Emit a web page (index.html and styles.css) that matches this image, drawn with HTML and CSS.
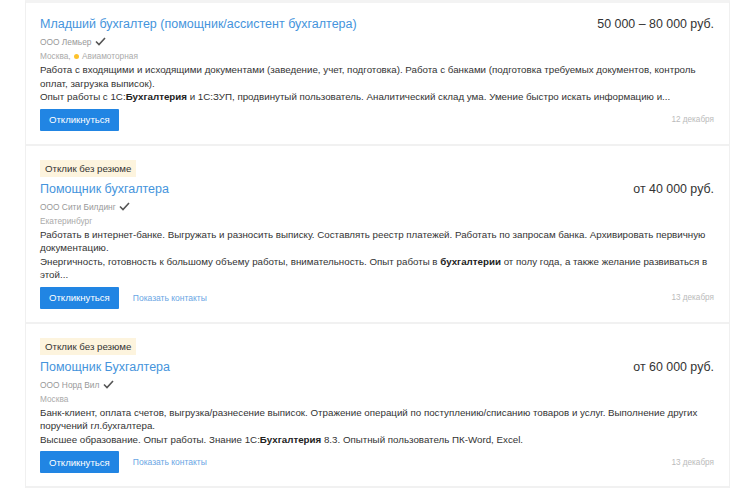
FILE: index.html
```html
<!DOCTYPE html>
<html lang="ru">
<head>
    <meta charset="UTF-8">
    <meta name="viewport" content="width=device-width, initial-scale=1.0">
    <title>Вакансии</title>
    <link rel="stylesheet" href="styles.css">
</head>
<body>
    <div class="list">
        <div class="vacancy">
            <div class="head">
                <a class="title" href="#">Младший бухгалтер (помощник/ассистент бухгалтера)</a>
                <span class="salary">50 000 – 80 000 руб.</span>
            </div>
            <div class="company">ООО Лемьер
                <svg class="check" width="11" height="9" viewBox="0 0 11 9"><polyline points="1,4.5 4,7.5 10,1" fill="none" stroke="#555" stroke-width="1.6"/></svg>
            </div>
            <div class="place">Москва, <span class="metro"></span>Авиамоторная</div>
            <div class="desc">
                <p>Работа с входящими и исходящими документами (заведение, учет, подготовка). Работа с банками (подготовка требуемых документов, контроль оплат, загрузка выписок).</p>
                <p>Опыт работы с 1С:<b>Бухгалтерия</b> и 1С:ЗУП, продвинутый пользователь. Аналитический склад ума. Умение быстро искать информацию и...</p>
            </div>
            <div class="foot">
                <button type="button" class="reply">Откликнуться</button>
                <span class="date">12 декабря</span>
            </div>
        </div>

        <div class="vacancy">
            <div class="badge">Отклик без резюме</div>
            <div class="head">
                <a class="title" href="#">Помощник бухгалтера</a>
                <span class="salary">от 40 000 руб.</span>
            </div>
            <div class="company">ООО Сити Билдинг
                <svg class="check" width="11" height="9" viewBox="0 0 11 9"><polyline points="1,4.5 4,7.5 10,1" fill="none" stroke="#555" stroke-width="1.6"/></svg>
            </div>
            <div class="place">Екатеринбург</div>
            <div class="desc">
                <p>Работать в интернет-банке. Выгружать и разносить выписку. Составлять реестр платежей. Работать по запросам банка. Архивировать первичную документацию.</p>
                <p>Энергичность, готовность к большому объему работы, внимательность. Опыт работы в <b>бухгалтерии</b> от полу года, а также желание развиваться в этой...</p>
            </div>
            <div class="foot">
                <button type="button" class="reply">Откликнуться</button>
                <a class="contacts" href="#">Показать контакты</a>
                <span class="date">13 декабря</span>
            </div>
        </div>

        <div class="vacancy">
            <div class="badge">Отклик без резюме</div>
            <div class="head">
                <a class="title" href="#">Помощник Бухгалтера</a>
                <span class="salary">от 60 000 руб.</span>
            </div>
            <div class="company">ООО Норд Вил
                <svg class="check" width="11" height="9" viewBox="0 0 11 9"><polyline points="1,4.5 4,7.5 10,1" fill="none" stroke="#555" stroke-width="1.6"/></svg>
            </div>
            <div class="place">Москва</div>
            <div class="desc">
                <p>Банк-клиент, оплата счетов, выгрузка/разнесение выписок. Отражение операций по поступлению/списанию товаров и услуг. Выполнение других поручений гл.бухгалтера.</p>
                <p>Высшее образование. Опыт работы. Знание 1С:<b>Бухгалтерия</b> 8.3. Опытный пользователь ПК-Word, Excel.</p>
            </div>
            <div class="foot">
                <button type="button" class="reply">Откликнуться</button>
                <a class="contacts" href="#">Показать контакты</a>
                <span class="date">13 декабря</span>
            </div>
        </div>
    </div>
</body>
</html>
```

FILE: styles.css
```css
body {
    font-family: Arial, "Liberation Sans", sans-serif;
    background-color: #fff;
    margin: 0;
    padding: 0;
    color: #333;
}
.list {
    margin-left: 25px;
    width: 703px;
    border-left: 1px solid #f0f0f0;
    border-right: 1px solid #f0f0f0;
    border-top: 3px solid #f3f3f3;
}
.vacancy {
    padding: 12px 15px 13px 14px;
    border-bottom: 2px solid #f1f1f1;
}
.badge {
    display: inline-block;
    background-color: #fdf4de;
    font-size: 9.7px;
    line-height: 17px;
    padding: 0 5px;
    margin-bottom: 3px;
    color: #333;
}
.head {
    display: flex;
    justify-content: space-between;
    align-items: baseline;
    line-height: 18px;
}
.title {
    font-size: 12.5px;
    color: #4594dc;
    text-decoration: none;
}
.salary {
    font-size: 12.4px;
    color: #333;
}
.company {
    font-size: 8.4px;
    line-height: 14px;
    margin-top: 2px;
    color: #999;
}
.check {
    vertical-align: -1px;
    margin-left: 1px;
}
.place {
    font-size: 8.3px;
    line-height: 13px;
    margin-top: 1px;
    color: #aaa;
}
.metro {
    display: inline-block;
    width: 5px;
    height: 5px;
    border-radius: 50%;
    background-color: #fdc22c;
    margin: 0 3px 0 1px;
    vertical-align: 0;
}
.desc {
    font-size: 9.75px;
    line-height: 13.5px;
    color: #333;
}
.desc p {
    margin: 0;
}
.desc b {
    color: #222;
}
.foot {
    display: flex;
    align-items: center;
    margin-top: 5px;
}
.reply {
    font-family: inherit;
    font-size: 9.6px;
    height: 22px;
    padding: 0 9px;
    border: none;
    border-radius: 1px;
    background-color: #2185e3;
    color: #fff;
    cursor: pointer;
}
.contacts {
    font-size: 8.5px;
    color: #6aa6e4;
    text-decoration: none;
    margin-left: 14px;
}
.date {
    margin-left: auto;
    font-size: 8.2px;
    color: #bbb;
}
```
